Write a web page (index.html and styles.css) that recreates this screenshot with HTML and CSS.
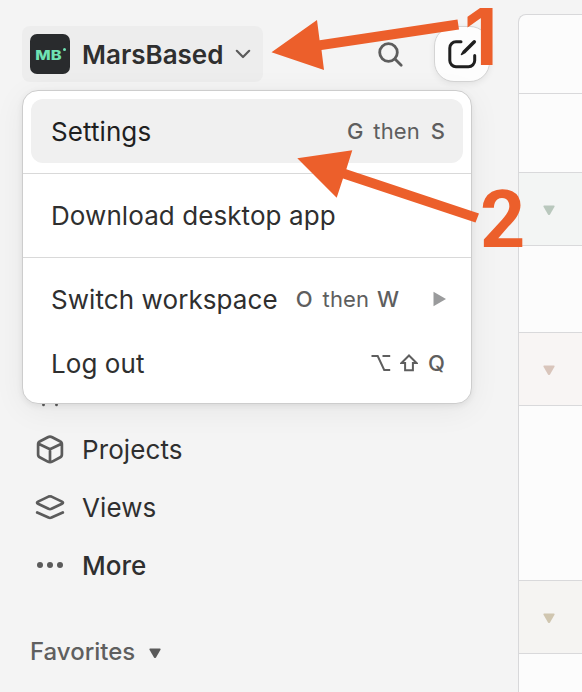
FILE: index.html
```html
<!DOCTYPE html>
<html lang="en">
<head>
<meta charset="utf-8">
<title>MarsBased</title>
<link rel="stylesheet" href="styles.css">
</head>
<body>
<div class="app">
  <aside class="sidebar">
    <header class="top">
      <button class="workspace">
        <span class="logo"><span class="logo-text">MB</span><i class="logo-dot"></i></span>
        <span class="workspace-name">MarsBased</span>
        <svg class="chevron" width="16" height="10" viewBox="0 0 16 10"><path d="M1.8 1.8 8 8l6.200-6.200"/></svg>
      </button>
      <svg class="search" width="26" height="26" viewBox="0 0 26 26"><circle cx="10.500" cy="10.500" r="8.800"/><path d="m17 17 6.200 6.200"/></svg>
      <button class="compose">
        <svg width="32" height="32" viewBox="0 0 32 32"><path d="M15 3.800H10a6.200 6.200 0 0 0-6.200 6.200v12.500a6.200 6.200 0 0 0 6.200 6.200h12.500a6.200 6.200 0 0 0 6.200-6.200V17.500"/><path class="pen" d="M29.500 2.500a1.700 1.700 0 0 1 .1 2.400L19.300 15.200l-3.200 1.900c-.9.500-1.700-.3-1.200-1.200l1.900-3.200L27.100 2.500c.7-.7 1.700-.7 2.400 0z"/></svg>
      </button>
    </header>
    <nav class="nav">
      <a class="nav-item covered"><svg width="32" height="32" viewBox="0 0 32 32"><path d="M9.500 26v2M22.500 26v2"/></svg></a>
      <a class="nav-item"><svg width="32" height="32" viewBox="0 0 32 32"><path d="M13.800 3.200a4.500 4.500 0 0 1 4.400 0l7.700 4.100a3.500 3.500 0 0 1 2 3.300v9.600a3.500 3.500 0 0 1-2 3.300l-7.700 4.100a4.500 4.500 0 0 1-4.400 0l-7.700-4.100a3.500 3.500 0 0 1-2-3.300v-9.600a3.500 3.500 0 0 1 2-3.300zM5 10 16 15.300l11-5.300M16 15.300V28"/></svg>Projects</a>
      <a class="nav-item"><svg width="32" height="32" viewBox="0 0 32 32"><path d="M14.500 4.600a4 4 0 0 1 3 0l10.500 5c1.300.7 1.300 1.600 0 2.200l-10.500 5a4 4 0 0 1-3 0l-10.500-5c-1.300-.6-1.300-1.500 0-2.200zM3.200 20.500l11.300 5a4 4 0 0 0 3 0L28.800 20.500"/></svg>Views</a>
      <a class="nav-item more"><svg class="dots" width="32" height="32" viewBox="0 0 32 32"><circle cx="6" cy="15" r="3"/><circle cx="16" cy="15" r="3"/><circle cx="26" cy="15" r="3"/></svg>More</a>
    </nav>
    <div class="favorites">Favorites <svg width="12" height="11" viewBox="0 0 12 11"><path d="M1 .5h10q1 .2.500 1.200L7 9.500q-1 1.200-2 0L.5 1.700Q0 .7 1 .5z"/></svg></div>
  </aside>
  <main class="board">
    <div class="row head"></div>
    <div class="row first"></div>
    <div class="row group green"><svg width="12" height="11" viewBox="0 0 12 11"><path d="M1 .5h10q1 .2.500 1.200L7 9.500q-1 1.200-2 0L.5 1.700Q0 .7 1 .5z"/></svg></div>
    <div class="row second"></div>
    <div class="row group pink"><svg width="12" height="11" viewBox="0 0 12 11"><path d="M1 .5h10q1 .2.500 1.200L7 9.500q-1 1.200-2 0L.5 1.700Q0 .7 1 .5z"/></svg></div>
    <div class="row third"></div>
    <div class="row group sand"><svg width="12" height="11" viewBox="0 0 12 11"><path d="M1 .5h10q1 .2.500 1.200L7 9.500q-1 1.200-2 0L.5 1.700Q0 .7 1 .5z"/></svg></div>
  </main>
</div>

<div class="menu">
  <div class="section">
    <div class="item active"><span class="label">Settings</span><span class="keys"><kbd>G</kbd><span class="then">then</span><kbd class="last-s">S</kbd></span></div>
  </div>
  <div class="section">
    <div class="item"><span class="label">Download desktop app</span></div>
  </div>
  <div class="section">
    <div class="item"><span class="label">Switch workspace</span><span class="keys inline"><kbd>O</kbd><span class="then">then</span><kbd>W</kbd></span><svg class="submenu" width="14" height="16" viewBox="0 0 14 16"><path d="M.5.800 13 8 .500 15.200z"/></svg></div>
    <div class="item"><span class="label">Log out</span><span class="keys symbols"><svg width="20" height="18" viewBox="0 0 20 18"><path d="M.5 2h6.200l6.500 14h6M11.500 2h7.700"/></svg><svg width="18" height="18" viewBox="0 0 18 18"><path d="M9 1.500 16.500 9h-3.600v7.300H5.100V9H1.500z"/></svg><kbd>Q</kbd></span></div>
  </div>
</div>

<div class="annotations">
  <svg width="582" height="692" viewBox="0 0 582 692"><path d="M271.500 52.300 317 20l2.600 20.200L457.500 19.500l1.500 10L321.500 50l2.500 20zM297.300 158.200l55-8-6 19L479 213.500l-3.500 9L343 178.500l-6.300 19.200z"/></svg>
  <span class="num one">1</span>
  <span class="num two">2</span>
</div>
</body>
</html>
```
FILE: styles.css
```css
* { box-sizing: border-box; }
body {
  margin: 0;
  width: 582px;
  height: 692px;
  overflow: hidden;
  background: #f4f4f4;
  color: #2f2f2f;
  font: 400 26px/32px Inter, sans-serif;
}
button { border: 0; padding: 0; font: inherit; color: inherit; }
svg { display: block; flex: none; }
.app { display: flex; height: 692px; }
.sidebar { width: 518px; flex: none; padding-top: 26px; }
.top { display: flex; align-items: center; height: 56px; padding-left: 22px; }
.workspace {
  display: flex;
  align-items: center;
  width: 241px;
  height: 56px;
  padding-left: 8px;
  border-radius: 8px;
  background: #ededed;
}
.logo {
  position: relative;
  display: flex;
  align-items: center;
  justify-content: center;
  width: 40px;
  height: 40px;
  border-radius: 7px;
  background: #292b2d;
  color: #6fe3b4;
}
.logo-text {
  font-size: 13px;
  font-weight: 800;
  line-height: 13px;
  transform: translate(-2px, 1px) scaleX(1.26);
}
.logo-dot { position: absolute; left: 33px; top: 14px; width: 3px; height: 3px; border-radius: 2px; background: #6fe3b4; }
.workspace-name { margin-left: 12px; padding-top: 1px; width: 141px; text-align: left; font-weight: 600; letter-spacing: 0; white-space: nowrap; }
.chevron { margin-left: 12px; fill: none; stroke: #5b5b5b; stroke-width: 2.200; stroke-linecap: round; stroke-linejoin: round; }
.search { margin: 1px 0 0 115px; fill: none; stroke: #5d5d5d; stroke-width: 2.800; stroke-linecap: round; }
.compose {
  display: flex;
  align-items: center;
  justify-content: center;
  width: 56px;
  height: 56px;
  margin-left: 30px;
  border: 1px solid #d4d4d4;
  border-radius: 20px;
  background: #fdfdfd;
  box-shadow: 0 2px 6px rgba(0, 0, 0, .07);
}
.compose svg { fill: none; stroke: #1f1f1f; stroke-width: 3; stroke-linecap: round; }
.compose .pen { fill: #1f1f1f; stroke: none; }
.nav { padding-top: 281px; }
.nav-item { display: flex; align-items: center; gap: 16px; height: 58px; padding-left: 34px; letter-spacing: .1px; }
.nav-item svg { fill: none; stroke: #5b5b5b; stroke-width: 2.700; stroke-linecap: round; stroke-linejoin: round; }
.nav-item .dots { fill: #5b5b5b; stroke: none; }
.covered { padding-top: 1px; }
.more { font-weight: 500; letter-spacing: 0; }
.favorites {
  display: flex;
  align-items: center;
  gap: 14px;
  height: 32px;
  margin-top: 41px;
  padding-left: 30px;
  color: #5f5f5f;
  font-size: 24px;
  font-weight: 500;
}
.favorites svg { margin-top: 2px; fill: #5a5a5a; }
.board {
  flex: 1;
  margin-top: 14px;
  border: 1px solid #d8d8da;
  border-width: 1px 0 0 1px;
  border-top-left-radius: 8px;
  background: #fcfcfc;
}
.row { border-bottom: 1px solid #d9d9db; }
.head { height: 79px; }
.first { height: 79px; }
.second { height: 87px; }
.third { height: 175px; }
.group { display: flex; align-items: center; height: 73px; padding: 2px 0 0 24px; }
.green { background: #f3f5f4; fill: #b9c8bd; }
.pink { background: #f8f5f4; fill: #d9c5bb; }
.sand { background: #f5f4f2; fill: #d0c6b0; }
.menu {
  position: absolute;
  left: 22px;
  top: 90px;
  width: 450px;
  height: 314px;
  border: 1px solid #cdcdcd;
  border-radius: 16px;
  background: #fff;
  box-shadow: 0 6px 32px rgba(0, 0, 0, .06), 0 2px 6px rgba(0, 0, 0, .07);
}
.section { padding: 10px 8px; }
.section:first-child { padding-top: 8px; }
.section + .section { border-top: 1px solid #d9d9d9; padding-top: 9px; }
.item { display: flex; align-items: center; height: 64px; padding: 0 18px 0 20px; border-radius: 12px; white-space: nowrap; }
.label { padding-top: 2px; letter-spacing: .08px; }
.active { background: #f0f0f0; color: #1f1f1f; }
.keys { display: flex; align-items: center; margin-left: auto; color: #5e5e5e; font-size: 22px; font-weight: 500; }
.keys.inline { margin-left: 18px; }
kbd { font: inherit; }
.then { margin: 0 8px 0 10px; font-weight: 400; letter-spacing: .1px; }
.last-s { margin-left: 3px; }
.submenu { margin: 0 -2px 0 auto; fill: #9a9b9c; }
.symbols svg { fill: none; stroke: #5e5e5e; stroke-width: 2; }
.symbols svg + svg { margin-left: 9px; }
.symbols kbd { margin-left: 10px; }
.annotations { position: absolute; left: 0; top: 0; fill: #ec5f2b; color: #ec5f2b; }
.num { position: absolute; font-weight: 700; font-size: 78px; line-height: 60px; }
.one { left: 464px; top: 7px; }
.two { left: 480px; top: 190px; font-family: Roboto, sans-serif; font-size: 79px; }
```
